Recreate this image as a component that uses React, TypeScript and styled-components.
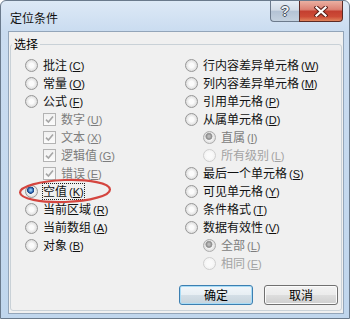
import React from "react";
import styled, { createGlobalStyle, css } from "styled-components";

const Global = createGlobalStyle`
  html, body { margin: 0; padding: 0; background: #ffffff; }
  body { font-family: "Noto Sans CJK SC", "Noto Sans", sans-serif; }
`;

const Window = styled.div`
  width: 350px;
  height: 319px;
  box-sizing: border-box;
  display: flex;
  flex-direction: column;
  border: 1px solid #6a7a8c;
  border-radius: 6px 6px 0 0;
  background: linear-gradient(180deg, #dde9f6 0px, #cadcf0 30px, #c0d6ed 100%);
  padding: 0 5px 4px 7px;
  font-family: "Noto Sans CJK SC", "Noto Sans", sans-serif;
  color: #000;
`;

const TitleBar = styled.div`
  height: 30px;
  flex: none;
  display: flex;
  align-items: flex-start;
  justify-content: space-between;
`;

const Title = styled.div`
  font-size: 12px;
  line-height: 14px;
  margin: 10px 0 0 2px;
  color: #111;
`;

const CaptionGroup = styled.div`
  display: flex;
  margin-right: 1px;
`;

const CaptionButton = styled.div<{ $kind: "help" | "close" }>`
  height: 21px;
  box-sizing: border-box;
  display: flex;
  align-items: center;
  justify-content: center;
  ${(p) =>
    p.$kind === "help"
      ? css`
          width: 29px;
          border: 1px solid #6c7a8c;
          border-top: none;
          border-right: none;
          border-radius: 0 0 0 4px;
          background: linear-gradient(180deg, #e6edf5 0%, #d2dbe6 45%, #b4c3d5 52%, #c4d1df 100%);
        `
      : css`
          width: 44px;
          border: 1px solid #5c2a24;
          border-top: none;
          border-radius: 0 0 4px 0;
          background: linear-gradient(180deg, #eab0a2 0%, #dc8274 42%, #c43f30 52%, #cd4b36 78%, #e0845c 100%);
        `}
`;

const HelpGlyph = styled.span`
  font-family: "Liberation Sans", sans-serif;
  font-weight: 700;
  font-size: 14px;
  line-height: 14px;
  color: #eef2f6;
  text-shadow: 1px 0 0 #4a5462, -1px 0 0 #4a5462, 0 1px 0 #4a5462, 0 -1px 0 #4a5462;
`;

const Client = styled.div`
  flex: 1;
  display: flex;
  flex-direction: column;
  box-sizing: border-box;
  border: 1px solid #93a5b9;
  background: #f0f0f0;
  padding: 5px 1px 2px 1px;
`;

const Group = styled.fieldset`
  flex: 1;
  margin: 0;
  padding: 0;
  min-width: 0;
  border: 1px solid #c9d1d7;
  border-radius: 3px;
  display: flex;
  flex-direction: column;
`;

const Legend = styled.legend`
  margin-left: 1px;
  padding: 0 2px;
  font-size: 12px;
  line-height: 14px;
  color: #000;
`;

const Body = styled.div`
  flex: 1;
  display: flex;
  flex-direction: column;
  padding: 5px 3px 4px 14px;
`;

const Columns = styled.div`
  display: grid;
  grid-template-columns: 160px 1fr;
`;

const Column = styled.div`
  display: flex;
  flex-direction: column;
`;

const Row = styled.div<{ $indent: boolean }>`
  position: relative;
  height: 18px;
  display: flex;
  align-items: center;
  gap: 5px;
  padding-left: ${(p) => (p.$indent ? 18 : 0)}px;
`;

const Radio = styled.span<{ $checked: boolean; $disabled: boolean; $faint: boolean }>`
  flex: none;
  width: 13px;
  height: 13px;
  box-sizing: border-box;
  border-radius: 50%;
  border: 1px solid ${(p) => (p.$faint ? "#cfcfcf" : p.$disabled ? "#acacac" : "#979797")};
  background: ${(p) => {
    const base = p.$faint
      ? "radial-gradient(circle, #fafafa 0 35%, #ececec 100%)"
      : "radial-gradient(circle, #fbfbfb 0 28%, #dedede 72%, #cdcdcd 100%)";
    if (!p.$checked) return base;
    const dot = p.$disabled
      ? "radial-gradient(circle at 45% 40%, #b9b9b9 0 1px, #8f8f8f 2.6px, #a5a5a5 3.3px, transparent 3.8px)"
      : "radial-gradient(circle at 42% 38%, #8cc3f0 0 0.8px, #2b66b3 2.4px, #163d7a 3.3px, transparent 3.9px)";
    return `${dot}, ${base}`;
  }};
`;

const Check = styled.span`
  flex: none;
  width: 13px;
  height: 13px;
  box-sizing: border-box;
  border: 1px solid #b3b3b3;
  background: linear-gradient(180deg, #f1f1f1, #fbfbfb);
  display: flex;
  align-items: center;
  justify-content: center;
`;

const Label = styled.span<{ $tone: "normal" | "dim" | "faint"; $focus: boolean }>`
  font-size: 12px;
  line-height: 14px;
  white-space: nowrap;
  color: ${(p) => (p.$tone === "dim" ? "#7d7d7d" : p.$tone === "faint" ? "#a3a3a3" : "#111")};
  ${(p) =>
    p.$focus &&
    css`
      outline: 1px dotted #222;
      outline-offset: 0px;
    `}
`;

const Key = styled.span`
  font-family: "Liberation Sans", "Noto Sans", sans-serif;
  font-size: 11px;
  margin-left: 2px;
  u { text-underline-offset: 1px; }
`;

const Circle = styled.svg`
  position: absolute;
  left: -7px;
  top: -11px;
  pointer-events: none;
  overflow: visible;
`;

const ButtonRow = styled.div`
  margin-top: 13px;
  display: flex;
  justify-content: flex-end;
  gap: 11px;
`;

const Button = styled.div<{ $default?: boolean }>`
  width: 74px;
  height: 20px;
  box-sizing: border-box;
  border-radius: 3px;
  display: flex;
  align-items: center;
  justify-content: center;
  font-size: 12px;
  line-height: 14px;
  color: #000;
  ${(p) =>
    p.$default
      ? css`
          border: 1px solid #3c7fb1;
          box-shadow: inset 0 0 0 1px #a9dcf6;
          background: linear-gradient(180deg, #f1f6fa 0%, #e7eef3 50%, #d3dee6 52%, #c6d3dc 100%);
        `
      : css`
          border: 1px solid #707070;
          box-shadow: inset 0 0 0 1px #fbfbfb;
          background: linear-gradient(180deg, #f2f2f2 0%, #ebebeb 50%, #dddddd 52%, #cfcfcf 100%);
        `}
`;

type Opt = {
  text: string;
  k: string;
  kind?: "radio" | "check";
  indent?: boolean;
  checked?: boolean;
  tone?: "normal" | "dim" | "faint";
  focus?: boolean;
  circled?: boolean;
};

const left: Opt[] = [
  { text: "批注", k: "C" },
  { text: "常量", k: "O" },
  { text: "公式", k: "F" },
  { text: "数字", k: "U", kind: "check", indent: true, checked: true, tone: "dim" },
  { text: "文本", k: "X", kind: "check", indent: true, checked: true, tone: "dim" },
  { text: "逻辑值", k: "G", kind: "check", indent: true, checked: true, tone: "dim" },
  { text: "错误", k: "E", kind: "check", indent: true, checked: true, tone: "dim" },
  { text: "空值", k: "K", checked: true, focus: true, circled: true },
  { text: "当前区域", k: "R" },
  { text: "当前数组", k: "A" },
  { text: "对象", k: "B" },
];

const right: Opt[] = [
  { text: "行内容差异单元格", k: "W" },
  { text: "列内容差异单元格", k: "M" },
  { text: "引用单元格", k: "P" },
  { text: "从属单元格", k: "D" },
  { text: "直属", k: "I", indent: true, checked: true, tone: "dim" },
  { text: "所有级别", k: "L", indent: true, tone: "faint" },
  { text: "最后一个单元格", k: "S" },
  { text: "可见单元格", k: "Y" },
  { text: "条件格式", k: "T" },
  { text: "数据有效性", k: "V" },
  { text: "全部", k: "L", indent: true, checked: true, tone: "dim" },
  { text: "相同", k: "E", indent: true, tone: "faint" },
];

function Option({ o }: { o: Opt }) {
  const tone = o.tone ?? "normal";
  return (
    <Row $indent={!!o.indent}>
      {o.kind === "check" ? (
        <Check>
          <svg width="9" height="9" viewBox="0 0 9 9">
            <path d="M1 4.6 L3.4 7 L8 1.4" fill="none" stroke="#a6a6a6" strokeWidth="1.6" />
          </svg>
        </Check>
      ) : (
        <Radio $checked={!!o.checked} $disabled={tone !== "normal"} $faint={tone === "faint"} />
      )}
      <Label $tone={tone} $focus={!!o.focus}>
        {o.text}
        <Key>
          (<u>{o.k}</u>)
        </Key>
      </Label>
      {o.circled && (
        <Circle width="96" height="34" viewBox="0 0 96 34">
          <ellipse
            cx="47"
            cy="20"
            rx="45"
            ry="11"
            fill="none"
            stroke="#d4453f"
            strokeWidth="2.2"
            transform="rotate(-2 47 20)"
          />
        </Circle>
      )}
    </Row>
  );
}

export default function App() {
  return (
    <>
      <Global />
      <Window>
        <TitleBar>
          <Title>定位条件</Title>
          <CaptionGroup>
            <CaptionButton $kind="help">
              <HelpGlyph>?</HelpGlyph>
            </CaptionButton>
            <CaptionButton $kind="close">
              <svg width="14" height="11" viewBox="0 0 14 11">
                <path d="M2.5 1.5 L11.5 9.5 M11.5 1.5 L2.5 9.5" stroke="#5a1f18" strokeWidth="4.2" strokeLinecap="square" />
                <path d="M2.5 1.5 L11.5 9.5 M11.5 1.5 L2.5 9.5" stroke="#ffffff" strokeWidth="2.2" strokeLinecap="square" />
              </svg>
            </CaptionButton>
          </CaptionGroup>
        </TitleBar>
        <Client>
          <Group>
            <Legend>选择</Legend>
            <Body>
              <Columns>
                <Column>
                  {left.map((o, i) => (
                    <Option key={i} o={o} />
                  ))}
                </Column>
                <Column>
                  {right.map((o, i) => (
                    <Option key={i} o={o} />
                  ))}
                </Column>
              </Columns>
              <ButtonRow>
                <Button $default>确定</Button>
                <Button>取消</Button>
              </ButtonRow>
            </Body>
          </Group>
        </Client>
      </Window>
    </>
  );
}
